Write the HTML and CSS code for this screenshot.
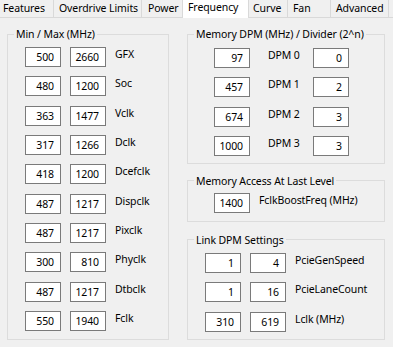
FILE: index.html
```html
<!DOCTYPE html>
<html>
<head>
    <meta charset="utf-8">
    <title>Frequency</title>
    <link rel="stylesheet" href="styles.css">
</head>
<body>
    <div class="tabs">
        <div class="tab tabFeatures">Features</div>
        <div class="tab tabOverdrive">Overdrive Limits</div>
        <div class="tab tabPower">Power</div>
        <div class="tab tabFrequency active">Frequency</div>
        <div class="tab tabCurve">Curve</div>
        <div class="tab tabFan">Fan</div>
        <div class="tab tabAdvanced">Advanced</div>
    </div>

    <div class="page">
        <fieldset class="group minMax">
            <legend>Min / Max (MHz)</legend>
            <div class="pairGrid">
                <div class="box">500</div><div class="box">2660</div><div class="name">GFX</div>
                <div class="box">480</div><div class="box">1200</div><div class="name">Soc</div>
                <div class="box">363</div><div class="box">1477</div><div class="name">Vclk</div>
                <div class="box">317</div><div class="box">1266</div><div class="name">Dclk</div>
                <div class="box">418</div><div class="box">1200</div><div class="name">Dcefclk</div>
                <div class="box">487</div><div class="box">1217</div><div class="name">Dispclk</div>
                <div class="box">487</div><div class="box">1217</div><div class="name">Pixclk</div>
                <div class="box">300</div><div class="box">810</div><div class="name">Phyclk</div>
                <div class="box">487</div><div class="box">1217</div><div class="name">Dtbclk</div>
                <div class="box">550</div><div class="box">1940</div><div class="name">Fclk</div>
            </div>
        </fieldset>

        <div class="side">
            <fieldset class="group memDpm">
                <legend>Memory DPM (MHz) / Divider (2^n)</legend>
                <div class="dpmGrid">
                    <div class="box">97</div><div class="name dpmName">DPM 0</div><div class="box">0</div>
                    <div class="box">457</div><div class="name dpmName">DPM 1</div><div class="box">2</div>
                    <div class="box">674</div><div class="name dpmName">DPM 2</div><div class="box">3</div>
                    <div class="box">1000</div><div class="name dpmName">DPM 3</div><div class="box">3</div>
                </div>
            </fieldset>

            <fieldset class="group memAccess">
                <legend>Memory Access At Last Level</legend>
                <div class="singleRow">
                    <div class="box">1400</div><div class="name">FclkBoostFreq (MHz)</div>
                </div>
            </fieldset>

            <fieldset class="group linkDpm">
                <legend>Link DPM Settings</legend>
                <div class="pairGrid">
                    <div class="box">1</div><div class="box">4</div><div class="name">PcieGenSpeed</div>
                    <div class="box">1</div><div class="box">16</div><div class="name">PcieLaneCount</div>
                    <div class="box">310</div><div class="box">619</div><div class="name">Lclk (MHz)</div>
                </div>
            </fieldset>
        </div>
    </div>
</body>
</html>
```

FILE: styles.css
```css
body {
    margin: 0;
    background-color: #f0f0f0;
    font-family: "Noto Sans", sans-serif;
    font-size: 10.5px;
    letter-spacing: -0.1px;
    color: #000;
}

/* tab strip */

.tabs {
    display: flex;
    height: 17px;
    border-bottom: 1px solid #d9d9d9;
}

.tab {
    box-sizing: border-box;
    height: 17px;
    padding-left: 5px;
    padding-top: 1px;
    line-height: 15px;
    border-right: 1px solid #d9d9d9;
    white-space: nowrap;
}

.tabFeatures { width: 54px; padding-left: 3px; }
.tabOverdrive { width: 88px; }
.tabPower { width: 41px; padding-left: 6px; }
.tabFrequency { width: 67px; }
.tabCurve { width: 39px; padding-left: 4px; }
.tabFan { width: 43px; }
.tabAdvanced { width: 58px; }

.tab.active {
    height: 18px;
    padding-top: 0;
    background-color: #fff;
    border-left: 1px solid #d9d9d9;
    margin-left: -1px;
    padding-left: 5px;
}

/* page */

.page {
    display: flex;
    gap: 18px;
    padding: 8px 0 0 7px;
}

.side {
    display: flex;
    flex-direction: column;
    width: 198px;
}

.group {
    margin: 0;
    padding: 0;
    min-width: 0;
    border: 1px solid #dcdcdc;
}

.group legend {
    margin-left: 6px;
    padding: 0 2px;
    line-height: 16px;
}

.minMax {
    width: 162px;
    box-sizing: border-box;
}

.memAccess {
    margin-top: 9px;
}

.linkDpm {
    margin-top: 10px;
}

.box {
    box-sizing: border-box;
    width: 36px;
    height: 20px;
    padding-right: 6px;
    border: 1px solid #7a7a7a;
    background-color: #fff;
    text-align: right;
    line-height: 18px;
}

.name {
    line-height: 14px;
    white-space: nowrap;
}

.pairGrid {
    display: grid;
    grid-template-columns: 36px 36px auto;
    column-gap: 9px;
    row-gap: 9.33px;
    padding: 5px 0 7px 17px;
}

.dpmGrid {
    display: grid;
    grid-template-columns: 36px 63px 36px;
    row-gap: 9.33px;
    padding: 6px 0 7px 26px;
}

.dpmName {
    padding-left: 18px;
}

.singleRow {
    display: flex;
    gap: 9px;
    padding: 4px 0 8px 26px;
}
```
